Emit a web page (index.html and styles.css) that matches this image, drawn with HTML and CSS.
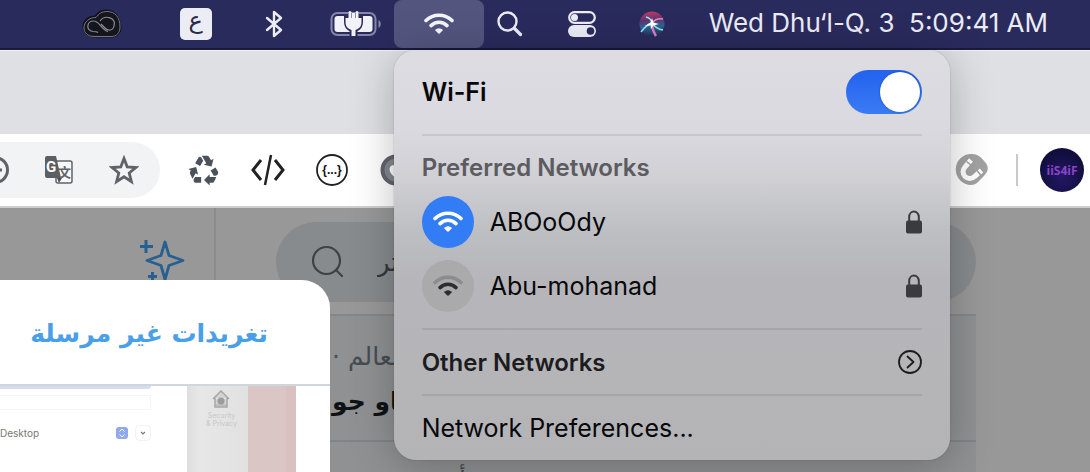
FILE: index.html
```html
<!DOCTYPE html>
<html lang="en">
<head>
<meta charset="utf-8">
<meta name="viewport" content="width=device-width, initial-scale=1">
<title>Wi-Fi</title>
<link rel="stylesheet" href="styles.css">
</head>
<body>
<svg class="defs" width="0" height="0" aria-hidden="true">
  <symbol id="wifi" viewBox="0 0 30 22">
    <path class="far" d="M2 8.6A18.4 18.4 0 0 1 28 8.6" fill="none" stroke="currentColor" stroke-width="3.6" stroke-linecap="round"/>
    <path d="M7 13.6A11.4 11.4 0 0 1 23 13.6" fill="none" stroke="currentColor" stroke-width="3.6" stroke-linecap="round"/>
    <path d="M10.9 18Q15 14.400 19.100 18L15.600 21.500Q15 22 14.400 21.500Z" fill="currentColor"/>
  </symbol>
  <symbol id="lock" viewBox="0 0 16 24">
    <path d="M3.200 12V6.800a4.800 5.300 0 0 1 9.600 0V12" fill="none" stroke="currentColor" stroke-width="2"/>
    <rect x="0" y="10.500" width="16" height="13" rx="2" fill="currentColor"/>
  </symbol>
</svg>

<header class="menubar">
  <button class="status" aria-label="Creative Cloud">
    <svg width="40" height="30" viewBox="0 0 40 30">
      <path d="M12 28h18a9 9 0 0 0 8-13C38 6 31 1 24 1c-6 0-9 3-11 6C5 7 1 12 1 18c0 6 5 10 11 10Z" fill="#15151d" stroke="#10101a" stroke-width="1"/>
      <path d="M14 27.500h15c6 0 9-4 9-9.500C38 8 33 2.500 25 2.500c-5 0-8 2-11 6C7 8.500 2 13 2 19c0 5 4 8.500 10 8.500h3" fill="none" stroke="#77777f" stroke-width="1"/>
      <path d="M16 23.500c-1-1-2.500-1-5-1-8-1-6-11 1-10.500 5 0 8 9 14 10.500M18 12c5-7 17-3 14 5-1 5-6 5-9 2l-4-4" fill="none" stroke="#8a8a90" stroke-width="1.200"/>
    </svg>
  </button>
  <button class="status" aria-label="Input source"><span class="input-source" lang="ar">ع</span></button>
  <button class="status" aria-label="Bluetooth">
    <svg width="18" height="28" viewBox="0 0 18 28" fill="none" stroke="#ececf6" stroke-width="2.400" stroke-linejoin="round" stroke-linecap="round"><path d="M2 8l14 12-7 6V2l7 6L2 20"/></svg>
  </button>
  <button class="status" aria-label="Battery, charging">
    <svg width="52" height="28" viewBox="0 0 52 28">
      <rect x="1.500" y="3" width="44" height="22" rx="6" fill="none" stroke="#8686a9" stroke-width="2"/>
      <path d="M48.500 10c3 1.500 3 6.500 0 8Z" fill="#8686a9"/>
      <rect x="4.500" y="6" width="38" height="16" rx="3" fill="#f1f1f8"/>
      <path d="M20 3v5h-4v4c0 5 3 7 5.500 8v5h4v-5c2.500-1 5.500-3 5.500-8V8h-4V3" fill="#f1f1f8" stroke="#2a2b5d" stroke-width="4"/>
      <path d="M15.500 8h16v4c0 5-3 7-6 8v6h-4v-6c-3-1-6-3-6-8Z" fill="#f1f1f8"/>
      <path d="M20 2.500v7M27 2.500v7" stroke="#f1f1f8" stroke-width="3" stroke-linecap="round"/>
    </svg>
  </button>
  <div class="wifi-slot">
    <button class="status active" aria-label="Wi-Fi" aria-expanded="true"><svg width="30" height="22"><use href="#wifi"/></svg></button>

    <section class="popover" aria-label="Wi-Fi menu">
      <div class="row head">
        <label for="wifi-on">Wi-Fi</label>
        <input class="switch" id="wifi-on" type="checkbox" checked>
      </div>
      <hr>
      <h2>Preferred Networks</h2>
      <ul>
        <li><button class="row network">
          <span class="badge on"><svg width="30" height="22"><use href="#wifi"/></svg></span>
          <span class="name">ABOoOdy</span>
          <svg class="lock" width="16" height="24"><use href="#lock"/></svg>
        </button></li>
        <li><button class="row network">
          <span class="badge weak"><svg width="30" height="22"><use href="#wifi"/></svg></span>
          <span class="name">Abu-mohanad</span>
          <svg class="lock" width="16" height="24"><use href="#lock"/></svg>
        </button></li>
      </ul>
      <hr>
      <button class="row other">Other Networks
        <svg width="24" height="24" viewBox="0 0 24 24" fill="none" stroke="currentColor" stroke-width="1.800" stroke-linecap="round" stroke-linejoin="round"><circle cx="12" cy="12" r="11"/><path d="M9.500 6.500l6 5.500-6 5.500"/></svg>
      </button>
      <hr>
      <button class="row">Network Preferences...</button>
    </section>
  </div>
  <button class="status" aria-label="Search">
    <svg width="26" height="26" viewBox="0 0 26 26" fill="none" stroke="#ececf6" stroke-linecap="round"><circle cx="10.500" cy="10.500" r="9" stroke-width="2.400"/><path d="M17.500 17.500l6 6" stroke-width="3.200"/></svg>
  </button>
  <button class="status" aria-label="Control Center">
    <svg width="28" height="28" viewBox="0 0 28 28"><rect x="1.200" y="2.200" width="25.600" height="10.600" rx="5.300" fill="none" stroke="#ececf6" stroke-width="2.200"/><circle cx="6.500" cy="7.500" r="3.500" fill="#ececf6"/><rect y="15" width="28" height="12" rx="6" fill="#ececf6"/><circle cx="22.500" cy="21" r="3.800" fill="#2a2b5d"/></svg>
  </button>
  <button class="status" aria-label="Siri">
    <svg width="28" height="28" viewBox="0 0 28 28">
      <defs><linearGradient id="siri" x1="0.400" y1="0" x2="0.500" y2="1"><stop offset="0" stop-color="#c13a68"/><stop offset=".35" stop-color="#5d3470"/><stop offset=".6" stop-color="#30629a"/><stop offset="1" stop-color="#202c4c"/></linearGradient></defs>
      <circle cx="14" cy="14" r="12.500" fill="url(#siri)"/>
      <path d="M14 13Q8 15 3 22M14 13Q13 8 8 7" stroke="#8ee2ee" stroke-width="1.500" fill="none"/>
      <path d="M14 13Q14 20 18 26" stroke="#d47ccc" stroke-width="2.500" fill="none"/>
      <path d="M14 13Q18 19 25 20" stroke="#8debcf" stroke-width="1.500" fill="none"/>
      <path d="M14 13Q18 8 25 9" stroke="#ef8ba9" stroke-width="1.500" fill="none"/>
      <path d="M14 8l1.500 4.500L21 14l-5.500 1.500L13 19l-.5-3.500L7 16l5.500-3.500Z" fill="#fff"/>
    </svg>
  </button>
  <time class="clock">Wed Dhu‘l-Q. 3&nbsp; 5:09:41 AM</time>
</header>

<div class="tabstrip"></div>

<nav class="toolbar" aria-label="Browser toolbar">
  <div class="address">
    <button aria-label="Add"><svg width="28" height="28" viewBox="0 0 28 28" fill="none" stroke="#5f6368" stroke-width="3"><circle cx="14" cy="14" r="12.500"/><path d="M7 14h14"/></svg></button>
    <button aria-label="Translate">
      <svg width="30" height="30" viewBox="0 0 30 30">
        <rect x="12" y="6" width="16" height="22" rx="2" fill="#f7f8f8" stroke="#606468" stroke-width="1.500"/>
        <text x="14" y="22" class="wen">文</text>
        <path d="M3 1h9l5 22H3q-2 0-2-2V3q0-2 2-2Z" fill="#5b5f63"/><path d="M13 23h5l-3 5Z" fill="#4d5054"/>
        <text x="2" y="17" class="g-letter">G</text>
      </svg>
    </button>
    <button aria-label="Bookmark"><svg width="30" height="30" viewBox="0 0 30 30" fill="none" stroke="#5f6368" stroke-width="2.800"><path d="M15 3.500l3.200 8.300 8.800.7-6.800 5.500 2.200 8.700-7.400-4.900-7.400 4.900 2.200-8.700-6.800-5.500 8.800-.7Z"/></svg></button>
  </div>
  <div class="extensions">
    <button aria-label="Recycle"><svg width="34" height="34" viewBox="0 0 24 24" fill="#4b525c"><path d="M5.770 7.150 7.200 4.780l1.030-1.710c.39-.65 1.330-.65 1.720 0l1.480 2.460-1.230 2.060-1 1.620-3.430-2.060zm15.950 5.820-1.600-2.660-3.460 2L18.870 16H20c.76 0 1.450-.43 1.790-1.110.14-.28.21-.58.21-.89 0-.36-.1-.71-.28-1.030zM16 21h1.500c.76 0 1.450-.43 1.790-1.110L20.740 17H16v-2l-4 4 4 4v-2zm-6-4H5.700l-.84 1.410c-.3.5-.32 1.120-.06 1.650.28.57.87.94 1.520.94H10v-4zm-3.880-2.650 1.730 1.040L6.480 9.900 1 11.270l1.700 1.020-.41.69c-.35.59-.38 1.310-.07 1.920l1.630 3.260 2.270-3.810zm10.900-9.210-1.300-2.170C15.350 2.370 14.700 2 14 2h-3.530l3.120 5.200-1.720 1.030 5.490 1.370 1.370-5.490-1.710 1.030z"/></svg></button>
    <button aria-label="Source"><svg width="34" height="32" viewBox="0 0 34 32" fill="none" stroke="#222" stroke-width="2.500"><path d="M10 6l-8 10 8 10M24 6l8 10-8 10" stroke-width="3"/><path d="M20 1l-6 30"/></svg></button>
    <button aria-label="JSON"><svg width="32" height="32" viewBox="0 0 32 32"><circle cx="16" cy="16" r="15" fill="none" stroke="#222" stroke-width="1.800"/><text x="16" y="20" class="json">{...}</text></svg></button>
    <button aria-label="Extension"><svg width="32" height="32" viewBox="0 0 32 32"><circle cx="16" cy="16" r="13.500" fill="#85888f" stroke="#62656d" stroke-width="4"/><path d="M16 24c-8-5-8-12-3-13l3 2 3-2c5 1 5 8-3 13Z" fill="#fff"/></svg></button>
    <button class="last" aria-label="Magnet"><svg width="34" height="34" viewBox="0 0 34 34"><path d="M16.500 1C23 1 26 4 30 9s4 9-2 15c-5 5-7 8-12 8A15.500 15.500 0 0 1 16.500 1Z" fill="#a2a2a2"/><path d="M16 7l-6 7a6.500 6.500 0 0 0 9.500 9.500l7-6" fill="none" stroke="#fff" stroke-width="5"/><path d="M11.500 8.500l5 4M22 17.500l4 5" stroke="#a2a2a2" stroke-width="1.500"/></svg></button>
  </div>
  <span class="separator"></span>
  <button class="avatar" aria-label="Profile">iiS4iF</button>
</nav>

<main class="page">
  <aside class="side">
    <svg width="46" height="46" viewBox="0 0 46 46" fill="none" stroke="#285f91" stroke-width="3" stroke-linejoin="round"><path d="M26 6l4 13.500 14 5-14 5-4 14-4-14-14-5 14-5Z" stroke-width="2.800"/><path d="M7 4v13M1 10.500h13M13.500 36v9M9 40.500h9"/></svg>
  </aside>
  <div class="feed">
    <div class="search" lang="ar">
      <svg width="34" height="34" viewBox="0 0 34 34" fill="none" stroke="#3d4247" stroke-width="2.200" stroke-linecap="round"><circle cx="15.500" cy="15.500" r="13.500"/><path d="M25 25l6 6"/></svg>
      <input dir="rtl" aria-label="Search" value="تويتر">
    </div>
    <section class="trends" lang="ar">
      <article>
        <p class="topic" dir="rtl">العالم ·</p>
        <p class="title" dir="rtl">ـاو جو</p>
      </article>
      <article class="next"><p class="topic" dir="rtl">أ</p></article>
    </section>
  </div>
  <section class="drafts">
    <h1 lang="ar" dir="rtl">تغريدات غير مرسلة</h1>
    <div class="preview">
      <div class="form">
        <div class="line"></div>
        <div class="field"></div>
        <div class="picker"><span>Desktop</span>
          <svg width="14" height="14" viewBox="0 0 14 14"><rect x="1" y="1" width="12" height="12" rx="3" fill="#91a9ed"/><path d="M4.500 5.500L7 3l2.500 2.500M4.500 8.500L7 11l2.500-2.500" fill="none" stroke="#fff"/></svg>
          <svg width="16" height="16" viewBox="0 0 16 16"><rect x=".5" y=".5" width="15" height="15" rx="4" fill="#fff" stroke="#f1f1f1"/><path d="M6 7l2 2 2-2" fill="none" stroke="#777" stroke-width="1.200"/></svg>
        </div>
      </div>
      <div class="privacy">
        <svg width="18" height="18" viewBox="0 0 18 18"><path d="M1 9l8-8 8 8M3 8v9h12V8" fill="#d3d3d3" stroke="#a6a6a6" stroke-width="1.500"/><circle cx="9" cy="11" r="3.500" fill="#9c9c9c"/><path d="M4 15h10" stroke="#aaa"/></svg>
        <span>Security<br>&amp; Privacy</span>
      </div>
      <div class="red"></div>
    </div>
  </section>
</main>
</body>
</html>
```

FILE: styles.css
```css
* { box-sizing: border-box; }

body {
  margin: 0;
  height: 100vh;
  display: flex;
  flex-direction: column;
  overflow: hidden;
  background: #999;
  font-family: Inter, "Liberation Sans", sans-serif;
}

h1, h2, p, ul { margin: 0; padding: 0; }
li { list-style: none; }

button {
  margin: 0;
  padding: 0;
  border: 0;
  background: none;
  color: inherit;
  font: inherit;
}

svg { display: block; flex: none; }
.defs { position: absolute; }

/* Menu bar */
.menubar {
  flex: none;
  height: 50px;
  display: grid;
  grid-template-columns: 120px 68px 88px 76px 90px 52px 92px 48px auto;
  justify-content: end;
  background: #2a2b5d;
  border-bottom: 2px solid #191a3c;
  color: #ececf6;
}

.status {
  height: 48px;
  width: 100%;
  display: flex;
  align-items: center;
  justify-content: center;
}

.status.active { border-radius: 8px; background: #54557f; color: #f4f4fb; }
.status.active svg { margin-top: -2px; }

.input-source {
  width: 32px;
  height: 32px;
  border-radius: 5px;
  background: #ececf4;
  color: #2a2b4d;
  font: 24px/24px "DejaVu Sans", sans-serif;
}

.clock {
  padding: 0 42px 0 33px;
  font-size: 26px;
  line-height: 46px;
  white-space: pre;
}

/* Wi-Fi menu */
.wifi-slot { position: relative; }

.popover {
  position: absolute;
  z-index: 5;
  top: 50px;
  left: 0;
  width: 556px;
  padding: 0 28px;
  border-radius: 22px;
  background: linear-gradient(#dcdce1 0, #d9d9df 80px, #cfcfd4 130px, #bebfc2 180px, #b6b6ba 230px, #b4b4b7 100%);
  box-shadow: 0 6px 44px rgba(0, 0, 0, .25), 0 0 2px rgba(0, 0, 0, .2);
  color: #08080a;
  font-size: 25px;
}

.popover hr {
  height: 2px;
  margin: 0;
  border: 0;
  background: rgba(0, 0, 0, .08);
}

.row {
  width: 100%;
  height: 64px;
  display: flex;
  align-items: center;
  text-align: left;
}

.row.head {
  height: 84px;
  justify-content: space-between;
  font-weight: 600;
}

.switch {
  appearance: none;
  width: 76px;
  height: 44px;
  margin: 0;
  padding: 2px;
  border-radius: 22px;
  background: linear-gradient(#2262ee, #3b7bf4);
}

.switch::before {
  content: "";
  display: block;
  width: 40px;
  height: 40px;
  margin-left: auto;
  border-radius: 50%;
  background: #fff;
  box-shadow: 0 0 2px rgba(0, 0, 0, .4);
}

.popover h2 {
  padding-top: 10px;
  color: #5b5b60;
  font-size: 24px;
  font-weight: 600;
  line-height: 44px;
}

.popover ul { padding-bottom: 10px; }
.network { gap: 16px; }
.name { flex: 1; }

.badge {
  width: 52px;
  height: 52px;
  display: flex;
  align-items: center;
  justify-content: center;
  border-radius: 50%;
}

.badge.on { background: #327cf6; color: #fff; }
.badge.weak { --far: #8c8c90; background: #aaaaad; color: #2d2d30; }
.badge svg { margin-top: -2px; }
.far { stroke: var(--far, currentColor); }
.lock { color: #3b3b3f; }

.other {
  justify-content: space-between;
  color: #1c1c1f;
  font-size: 24px;
  font-weight: 600;
}

/* Browser chrome */
.tabstrip {
  flex: none;
  height: 84px;
  border-top: 1px solid #f2f2f6;
  background: #dfe0e4;
}

.toolbar {
  flex: none;
  height: 74px;
  display: flex;
  align-items: center;
  padding-right: 6px;
  border-bottom: 2px solid #cfcfcf;
  background: #fff;
}

.address {
  width: 160px;
  height: 56px;
  display: flex;
  align-items: center;
  justify-content: space-between;
  padding-right: 21px;
  border-radius: 0 28px 28px 0;
  background: #f1f3f4;
}

.address button:first-child { margin-left: -19px; }
.g-letter { fill: #fff; font: bold 15px Roboto, sans-serif; }
.wen { fill: #5f6368; font: bold 13px "Noto Sans CJK SC", sans-serif; }

.extensions {
  flex: 1;
  display: flex;
  padding: 0 12px;
}

.extensions button {
  width: 64px;
  display: flex;
  align-items: center;
  justify-content: center;
}

.extensions .last { margin-left: auto; }
.json { fill: #111; font: bold 12px "Liberation Sans", sans-serif; text-anchor: middle; }

.separator { width: 2px; height: 32px; background: #c9c9c9; }

.avatar {
  width: 44px;
  height: 44px;
  margin-left: 22px;
  border-radius: 50%;
  background: radial-gradient(circle at 50% 65%, #221866, #110d3c 70%);
  color: #8b43c8;
  font: bold 12px "Open Sans", sans-serif;
}

/* Page under the dimming layer */
.page {
  position: relative;
  flex: 1;
  min-height: 0;
  display: flex;
  overflow: hidden;
  padding-right: 114px;
  background: #989898;
}

.side {
  flex: none;
  width: 216px;
  display: flex;
  justify-content: flex-end;
  align-items: flex-start;
  padding: 28px 29px 0 0;
  border-right: 2px solid #8a8b8c;
}

.feed { flex: 1; min-width: 0; padding: 14px 0 0 60px; }

.search {
  height: 80px;
  display: flex;
  align-items: center;
  gap: 32px;
  padding: 0 35px;
  border-radius: 40px;
  background: #878b8e;
}

.search input {
  width: 80px;
  padding: 0;
  border: 0;
  background: none;
  color: #33383c;
  font: 26px "DejaVu Sans", sans-serif;
  text-align: left;
}

.trends {
  margin-top: 12px;
  border-top: 2px solid #85888a;
  background: #8f9193;
  font-family: "DejaVu Sans", sans-serif;
}

.trends article {
  height: 126px;
  padding: 20px 0 0 56px;
  border-bottom: 2px solid #818486;
}

.topic { color: #464d52; font-size: 25px; line-height: 42px; text-align: left; }
.title { color: #0f1214; font-size: 25px; font-weight: bold; line-height: 48px; text-align: left; }
.trends .next { height: auto; padding: 18px 0 0 183px; border: 0; }

/* Drafts dialog */
.drafts {
  position: absolute;
  z-index: 2;
  top: 72px;
  bottom: 0;
  left: 0;
  width: 330px;
  display: flex;
  flex-direction: column;
  overflow: hidden;
  border-radius: 0 28px 0 0;
  background: #fff;
}

.drafts h1 {
  flex: none;
  height: 106px;
  padding-right: 62px;
  border-bottom: 2px solid #cfd6dc;
  color: #4aa0e8;
  font: bold 25px/108px "DejaVu Sans", sans-serif;
  white-space: nowrap;
}

.preview { flex: 1; display: flex; }
.form { width: 187px; }
.line { width: 151px; height: 3px; border-radius: 0 0 3px 0; background: #d4dcf3; }
.field { width: 151px; height: 15px; margin-top: 6px; border: 1px solid #f5f5f5; border-left: 0; }

.picker {
  display: flex;
  align-items: center;
  gap: 6px;
  width: 151px;
  margin-top: 15px;
  color: #777;
  font-size: 10px;
}

.picker span { flex: 1; }

.privacy {
  width: 61px;
  padding-top: 4px;
  background: linear-gradient(90deg, #dedede, #e7e7e7 20%, #e1e1e1);
  color: #c6c6c6;
  font-size: 7px;
  line-height: 8px;
  text-align: center;
}

.privacy svg { margin: 0 auto 4px 25px; }
.privacy span { padding-left: 8px; display: block; }
.red { width: 48px; background: linear-gradient(90deg, #dac7c5 78%, #d8c1bf 80%); }
```
